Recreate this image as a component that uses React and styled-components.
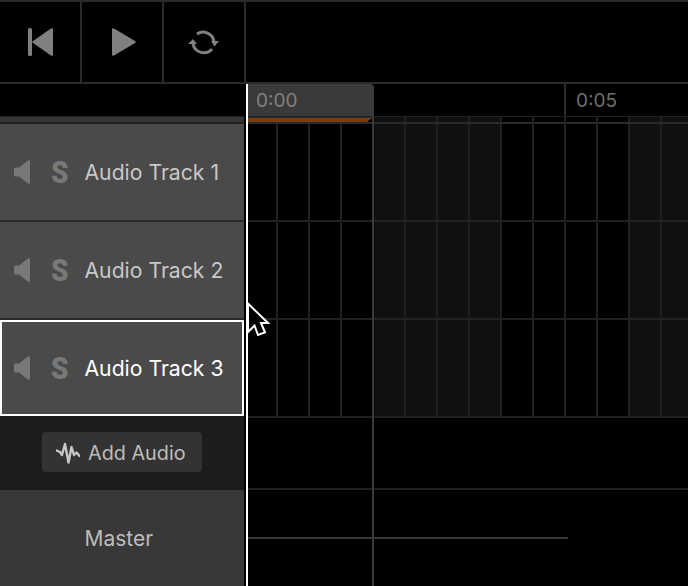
import React from "react";
import styled, { createGlobalStyle } from "styled-components";

const GlobalStyle = createGlobalStyle`
  html, body {
    margin: 0;
    background: #000;
  }
`;

const tracks = ["Audio Track 1", "Audio Track 2", "Audio Track 3"];
const shaded = [4, 5, 6, 7, 12, 13];
const cells = Array.from({ length: 14 }, (_, i) => i);

function GridCells() {
  return cells.map((i) => <Cell key={i} $first={i === 0} $shaded={shaded.includes(i)} />);
}

export default function App() {
  return (
    <Page>
      <GlobalStyle />
      <Toolbar>
        <TransportButton $shift={2}>
          <svg width="26" height="28" viewBox="0 0 26 28">
            <rect x="0" y="0" width="4" height="28" rx="1.5" fill="#808080" />
            <path d="M25 1.5V26.5Q25 28.5 23 27.5L5 15Q3.5 14 5 13L23 .5Q25-.5 25 1.5Z" fill="#808080" />
          </svg>
        </TransportButton>
        <TransportButton $shift={4}>
          <svg width="24" height="28" viewBox="0 0 24 28">
            <path d="M0 1.5Q0-.5 2 .5L23 13Q24.5 14 23 15L2 27.5Q0 28.5 0 26.5Z" fill="#808080" />
          </svg>
        </TransportButton>
        <TransportButton>
          <svg width="32" height="26" viewBox="0 0 32 26">
            <path d="M9 5A11 11 0 0 1 26 12.5M5 15A11 11 0 0 0 24 20" fill="none" stroke="#808080" strokeWidth="3" />
            <path d="M23 12H31L26.5 17.5Z M0 15H9L5 10Z" fill="#808080" />
          </svg>
        </TransportButton>
      </Toolbar>
      <Body>
        <Sidebar>
          <SidebarHead />
          <HeadStrip />
          {tracks.map((name, i) => (
            <Track key={name} $selected={i === 2}>
              <svg width="16" height="24" viewBox="0 0 16 24">
                <path d="M0 9Q0 7.5 1.5 7.5H5L14 .5Q16-.5 16 1.5V22.5Q16 24.5 14 23.5L5 16.5H1.5Q0 16.5 0 15Z" fill="#787878" />
              </svg>
              <SoloLabel>S</SoloLabel>
              <TrackName $selected={i === 2}>{name}</TrackName>
            </Track>
          ))}
          <AddArea>
            <AddButton>
              <svg width="24" height="22" viewBox="0 0 24 22">
                <path d="M.5 8.500L4 10L6 13L9 2L12.500 20.500L15.500 5L18 13L20.500 10.500L23.500 14" fill="none" stroke="#c8c8c8" strokeWidth="2.400" strokeLinecap="round" strokeLinejoin="round" />
              </svg>
              Add Audio
            </AddButton>
          </AddArea>
          <Master>Master</Master>
        </Sidebar>
        <Timeline>
          <Ruler>
            <RulerTab>0:00</RulerTab>
            <RulerGap />
            <RulerLabel>0:05</RulerLabel>
          </Ruler>
          <LoopStrip>
            <GridCells />
            <LoopBar />
          </LoopStrip>
          {tracks.map((name) => (
            <TrackRow key={name}>
              <GridCells />
            </TrackRow>
          ))}
          <EmptyRow />
          <MasterRow>
            <Automation />
          </MasterRow>
          <Playhead />
        </Timeline>
      </Body>
      <Cursor width="24" height="38" viewBox="0 0 24 38">
        <path d="M2 1.500V30L8.500 23.500L12 33L19 30.500L15 21H22Z" fill="#000" stroke="#fff" strokeWidth="2" />
      </Cursor>
    </Page>
  );
}

const Page = styled.div`
  position: relative;
  width: 688px;
  height: 586px;
  overflow: hidden;
  background: #000;
  font-family: Inter, "Liberation Sans", sans-serif;
`;

const Toolbar = styled.div`
  display: flex;
  height: 80px;
  border-top: 2px solid #2a2a2a;
  border-bottom: 2px solid #2a2a2a;
`;

const TransportButton = styled.div`
  box-sizing: content-box;
  display: flex;
  align-items: center;
  justify-content: center;
  width: ${(p) => 80 - (p.$shift || 0)}px;
  padding-left: ${(p) => p.$shift || 0}px;
  border-right: 2px solid #2a2a2a;
`;

const Body = styled.div`
  display: flex;
  height: 502px;
`;

const Sidebar = styled.div`
  display: flex;
  flex-direction: column;
  flex: none;
  width: 244px;
  padding-right: 2px;
  border-right: 2px solid #fff;
  background: #000;
`;

const SidebarHead = styled.div`
  height: 32px;
`;

const HeadStrip = styled.div`
  box-sizing: border-box;
  height: 8px;
  background: #353535;
  border-top: 1px solid #222;
  border-bottom: 2px solid #222;
`;

const Track = styled.div`
  box-sizing: border-box;
  display: flex;
  align-items: center;
  height: 96px;
  margin-bottom: ${(p) => (p.$selected ? "0" : "2px")};
  padding-left: ${(p) => (p.$selected ? "12px" : "14px")};
  background: #4a4a4a;
  border: ${(p) => (p.$selected ? "2px solid #fff" : "none")};
  box-shadow: ${(p) => (p.$selected ? "none" : "0 2px 0 #2a2a2a")};
`;

const SoloLabel = styled.span`
  display: inline-block;
  width: 16px;
  margin: 0 17.500px 0 21px;
  font-family: Roboto, sans-serif;
  font-size: 32px;
  font-weight: 900;
  line-height: 1;
  color: #787878;
  transform: scaleX(0.87);
  transform-origin: left center;
`;

const TrackName = styled.span`
  font-size: 21.200px;
  color: ${(p) => (p.$selected ? "#fff" : "#c8c8c8")};
`;

const AddArea = styled.div`
  box-sizing: border-box;
  display: flex;
  align-items: center;
  justify-content: center;
  height: 74px;
  padding-bottom: 2px;
  background: #1c1c1c;
`;

const AddButton = styled.div`
  box-sizing: border-box;
  display: flex;
  align-items: center;
  gap: 8px;
  width: 160px;
  height: 40px;
  padding: 2px 0 0 14px;
  border-radius: 4px;
  background: #333;
  font-size: 19.800px;
  color: #bdbdbd;
`;

const Master = styled.div`
  display: flex;
  align-items: center;
  height: 96px;
  padding-left: 84.500px;
  background: #383838;
  font-size: 21px;
  color: #bdbdbd;
`;

const Timeline = styled.div`
  position: relative;
  flex: 1;
  min-width: 0;
  overflow: hidden;
`;

const Ruler = styled.div`
  display: flex;
  height: 32px;
`;

const RulerTab = styled.div`
  box-sizing: border-box;
  display: flex;
  align-items: center;
  flex: none;
  width: 126px;
  padding: 1px 0 0 8px;
  border-top-right-radius: 4px;
  background: #3a3a3a;
  font-size: 19px;
  color: #808080;
`;

const RulerGap = styled.div`
  flex: none;
  width: 190px;
  border-right: 2px solid #2a2a2a;
`;

const RulerLabel = styled.div`
  display: flex;
  align-items: center;
  padding: 1px 0 0 10px;
  font-size: 19px;
  color: #6e6e6e;
`;

const GridRow = styled.div`
  display: flex;
  box-sizing: border-box;
  width: 440px;
  overflow: hidden;
`;

const LoopStrip = styled(GridRow)`
  position: relative;
  height: 8px;
  background: #161616;
  border-top: 1px solid #222;
  border-bottom: 2px solid #2a2a2a;
`;

const LoopBar = styled.div`
  position: absolute;
  left: 0;
  top: 1px;
  width: 124px;
  height: 4px;
  background: #7a3d0c;
  box-shadow: 0 -1px 0 #2a2a2a;
  clip-path: polygon(0 -1px, 100% -1px, 100% 0, 96% 100%, 0 100%);
`;

const TrackRow = styled(GridRow)`
  height: 98px;
  border-bottom: 2px solid #222;
`;

const Cell = styled.div`
  box-sizing: border-box;
  flex: none;
  width: ${(p) => (p.$first ? "30px" : "32px")};
  border-right: 2px solid ${(p) => (p.$shaded ? "#1e1e1e" : "#222")};
  background: ${(p) => (p.$shaded ? "#101010" : "#000")};
`;

const EmptyRow = styled.div`
  height: 70px;
  border-bottom: 2px solid #222;
`;

const MasterRow = styled.div`
  padding-top: 47px;
`;

const Automation = styled.div`
  width: 320px;
  height: 2px;
  background: #383838;
`;

const Playhead = styled.div`
  position: absolute;
  top: 32px;
  bottom: 0;
  left: 124px;
  width: 2px;
  background: #3a3a3a;
`;

const Cursor = styled.svg`
  position: absolute;
  left: 246px;
  top: 302px;
`;
